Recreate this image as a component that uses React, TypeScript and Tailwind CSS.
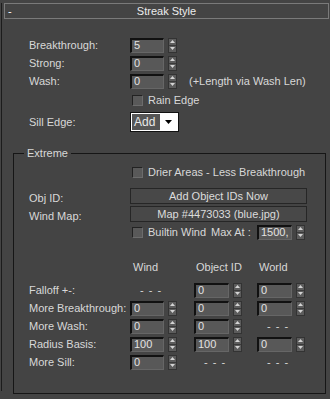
import type { ReactNode } from 'react'

function Spinner() {
  return (
    <div className="w-[9px] h-[15px] flex flex-col bg-[#5c5c5c] border border-[#333]">
      <div className="flex-1 flex items-center justify-center">
        <svg width="5" height="3" viewBox="0 0 5 3"><path d="M2.5 0L5 3H0z" fill="#d4d4d4" /></svg>
      </div>
      <div className="h-px bg-[#3a3a3a]" />
      <div className="flex-1 flex items-center justify-center">
        <svg width="5" height="3" viewBox="0 0 5 3"><path d="M0 0H5L2.5 3z" fill="#d4d4d4" /></svg>
      </div>
    </div>
  )
}

function NumField({ value, wide }: { value: string; wide?: boolean }) {
  return (
    <div className="flex items-center gap-[4px]">
      <div
        className={`h-[15px] ${wide ? 'w-[35px]' : 'w-[34px]'} bg-[#585858] border-t-2 border-l-2 border-r border-b border-t-[#111] border-l-[#111] border-r-[#666] border-b-[#666] flex items-center pl-[2px] text-[#e2e2e2] leading-none`}
      >
        {value}
      </div>
      <Spinner />
    </div>
  )
}

function Check() {
  return <div className="w-[11px] h-[11px] bg-[#595959] border border-t-[#222] border-l-[#222] border-r-[#6c6c6c] border-b-[#6c6c6c]" />
}

function Label({ children, className = '' }: { children: ReactNode; className?: string }) {
  return <div className={`w-[101px] shrink-0 ${className}`}>{children}</div>
}

function Dashes() {
  return <span className="pl-[10px] tracking-[1px]">- - -</span>
}

function Btn({ children }: { children: ReactNode }) {
  return (
    <div className="w-[177px] h-[16px] bg-[#484848] border border-[#262626] flex items-center justify-center text-[#dcdcdc] leading-none">
      {children}
    </div>
  )
}

export default function App() {
  const cols = 'flex items-center h-[18px]'
  return (
    <div className="w-[330px] h-[399px] bg-[#444444] pt-[11px] overflow-hidden font-['Liberation_Sans',Arial,sans-serif] text-[11px] text-[#d8d8d8]">
      <div className="ml-[1px] h-full border-l border-[#1c1c1c]">
        {/* Rollout header */}
        <div className="-mt-[8px] ml-[2px] w-[325px] h-[16px] border border-[#7a7a7a] grid grid-cols-[20px_1fr_20px] items-center">
          <span className="pl-[3px] text-white leading-none">-</span>
          <span className="text-center text-[#ececec] leading-none">Streak Style</span>
          <span />
        </div>

        {/* Top parameters */}
        <div className="mt-[17px] pl-[27px]">
          <div className={cols}>
            <Label>Breakthrough:</Label>
            <NumField value="5" />
          </div>
          <div className={cols}>
            <Label>Strong:</Label>
            <NumField value="0" />
          </div>
          <div className={cols}>
            <Label>Wash:</Label>
            <NumField value="0" />
            <span className="ml-[12px]">(+Length via Wash Len)</span>
          </div>
          <div className="flex items-center h-[20px]">
            <Label />
            <div className="ml-[2px]"><Check /></div>
            <span className="ml-[5px]">Rain Edge</span>
          </div>
          <div className="flex items-center h-[24px]">
            <Label>Sill Edge:</Label>
            <div className="w-[49px] h-[20px] border border-[#111] flex">
              <div className="flex-1 border border-white flex">
                <div className="w-[28px] bg-[#555] flex items-center pl-[2px] text-[#e8e8e8] leading-none text-[12px]">Add</div>
                <div className="flex-1 bg-white flex items-center justify-center">
                  <svg width="7" height="4" viewBox="0 0 7 4"><path d="M0 0H7L3.5 4z" fill="#000" /></svg>
                </div>
              </div>
            </div>
          </div>
        </div>

        {/* Extreme group */}
        <div className="mt-[19px] ml-[11px] w-[313px] h-[241px] border border-[#161616] relative">
          <span className="absolute -top-[8px] left-[10px] px-[3px] bg-[#444444] leading-[14px]">Extreme</span>
          <div className="pl-[15px] pt-[9px]">
            <div className={cols}>
              <Label />
              <div className="ml-[2px]"><Check /></div>
              <span className="ml-[5px]">Drier Areas - Less Breakthrough</span>
            </div>
            <div className="mt-[6px] flex items-center h-[18px]">
              <Label className="pt-[4px]">Obj ID:</Label>
              <Btn>Add Object IDs Now</Btn>
            </div>
            <div className="flex items-center h-[18px]">
              <Label className="pt-[4px]">Wind Map:</Label>
              <Btn>Map #4473033 (blue.jpg)</Btn>
            </div>
            <div className={cols}>
              <Label />
              <div className="ml-[2px]"><Check /></div>
              <span className="ml-[5px] w-[63px] shrink-0">Builtin Wind</span>
              <span className="w-[46px] shrink-0">Max At :</span>
              <NumField value="1500," wide />
            </div>

            {/* Per-source table */}
            <div className="mt-[17px] flex items-center h-[18px]">
              <Label />
              <div className="w-[64px] pl-[3px]">Wind</div>
              <div className="w-[63px] pl-[2px]">Object ID</div>
              <div className="pl-[2px]">World</div>
            </div>
            {[
              ['Falloff +-:', null, '0', '0'],
              ['More Breakthrough:', '0', '0', '0'],
              ['More Wash:', '0', '0', null],
              ['Radius Basis:', '100', '100', '0'],
              ['More Sill:', '0', null, null],
            ].map(([label, a, b, c], i) => (
              <div key={label as string} className={`flex items-center h-[18px] ${i === 0 ? 'mt-[5px]' : ''}`}>
                <Label>{label}</Label>
                <div className="w-[64px]">{a === null ? <Dashes /> : <NumField value={a} />}</div>
                <div className="w-[63px]">{b === null ? <Dashes /> : <NumField value={b} wide />}</div>
                <div>{c === null ? <Dashes /> : <NumField value={c} wide />}</div>
              </div>
            ))}
          </div>
        </div>
      </div>
    </div>
  )
}
